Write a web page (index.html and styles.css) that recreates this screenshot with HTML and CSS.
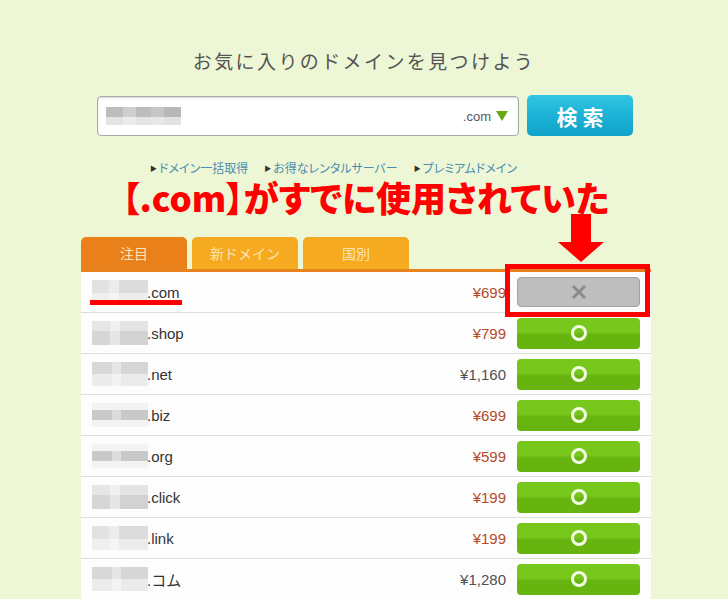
FILE: index.html
```html
<!DOCTYPE html>
<html lang="ja">
<head>
<meta charset="utf-8">
<link rel="stylesheet" href="styles.css">
</head>
<body>
<div class="page">
  <h1 class="title">お気に入りのドメインを見つけよう</h1>
  <div class="search">
    <div class="input">
      <span class="blur blur-input"></span>
      <span class="tld">.com</span>
      <span class="tri"></span>
    </div>
    <button class="go">検索</button>
  </div>
  <div class="links">
    <a><span class="mk">▶</span>ドメイン一括取得</a>
    <a><span class="mk">▶</span>お得なレンタルサーバー</a>
    <a><span class="mk">▶</span>プレミアムドメイン</a>
  </div>
  <div class="note">【.com】がすでに使用されていた</div>
  <div class="results">
    <div class="tabs">
      <div class="tab tab-on">注目</div>
      <div class="tab">新ドメイン</div>
      <div class="tab">国別</div>
    </div>
    <div class="bar"></div>
    <div class="rows">
      <div class="row"><span class="blur b1"></span><span class="name">.com</span><span class="price">¥699</span><span class="btn btn-no"><svg width="16" height="16" viewBox="0 0 16 16"><path d="M2 2L14 14M14 2L2 14" stroke="#8a8a8a" stroke-width="3"/></svg></span><span class="uline"></span></div>
      <div class="row"><span class="blur b2"></span><span class="name">.shop</span><span class="price">¥799</span><span class="btn"><span class="ring"></span></span></div>
      <div class="row"><span class="blur b3"></span><span class="name">.net</span><span class="price dark">¥1,160</span><span class="btn"><span class="ring"></span></span></div>
      <div class="row"><span class="blur b4"></span><span class="name">.biz</span><span class="price">¥699</span><span class="btn"><span class="ring"></span></span></div>
      <div class="row"><span class="blur b4"></span><span class="name">.org</span><span class="price">¥599</span><span class="btn"><span class="ring"></span></span></div>
      <div class="row"><span class="blur b2"></span><span class="name">.click</span><span class="price">¥199</span><span class="btn"><span class="ring"></span></span></div>
      <div class="row"><span class="blur b1"></span><span class="name">.link</span><span class="price">¥199</span><span class="btn"><span class="ring"></span></span></div>
      <div class="row"><span class="blur b3"></span><span class="name">.コム</span><span class="price dark">¥1,280</span><span class="btn"><span class="ring"></span></span></div>
    </div>
    <div class="hl"></div>
    <svg class="arrow" width="46" height="48" viewBox="0 0 46 48"><path d="M13 0H33V28H46L23 48L0 28H13Z" fill="#f00"/></svg>
  </div>
</div>
</body>
</html>
```
FILE: styles.css
```css
html, body {
  margin: 0;
  padding: 0;
  background: #edf7d6;
  font-family: "Liberation Sans", "Noto Sans CJK JP", sans-serif;
  overflow: hidden;
}
.page {
  padding-top: 49px;
}
.title {
  margin: 0;
  text-align: center;
  font-weight: normal;
  font-size: 19px;
  line-height: 24px;
  letter-spacing: 2.4px;
  color: #555;
  font-family: "Noto Sans CJK JP", sans-serif;
}
.search {
  display: flex;
  gap: 8px;
  margin: 23px 0 0 97px;
}
.input {
  box-sizing: border-box;
  width: 422px;
  height: 40px;
  background: #fff;
  border: 1px solid #a9a9a9;
  border-radius: 4px;
  box-shadow: inset 0 1px 2px rgba(0,0,0,.15);
  display: flex;
  align-items: center;
  padding: 0 10px 0 8px;
}
.blur {
  display: block;
  flex: none;
}
.blur-input {
  width: 75px;
  height: 18px;
  background:
    linear-gradient(180deg, rgba(255,255,255,0) 0 55%, rgba(255,255,255,.6) 55% 100%),
    linear-gradient(90deg, #bdbdbd 0 22%, #cfcfcf 22% 40%, #bcbcbc 40% 60%, #c6c6c6 60% 78%, #b8b8b8 78% 100%);
}
.tld {
  margin-left: auto;
  font-size: 13px;
  color: #555;
}
.tri {
  width: 0;
  height: 0;
  margin-left: 5px;
  border-left: 6px solid transparent;
  border-right: 6px solid transparent;
  border-top: 10px solid #6aa812;
}
.go {
  width: 106px;
  height: 41px;
  margin-top: -1px;
  border: none;
  border-radius: 5px;
  background: linear-gradient(180deg, #33c6e4 0%, #1bb2d6 50%, #12a2c8 100%);
  color: #fff;
  font-family: "Noto Sans CJK JP", sans-serif;
  font-weight: 700;
  font-size: 21px;
  letter-spacing: 5px;
  padding: 0 0 0 5px;
}
.links {
  display: flex;
  gap: 16px;
  margin: 24px 0 0 150px;
  font-family: "Noto Sans CJK JP", sans-serif;
  font-size: 12px;
  line-height: 16px;
  color: #4a8cb2;
  font-feature-settings: "palt";
}
.mk {
  font-size: 7px;
  margin-right: 2px;
  vertical-align: 2px;
  color: #333;
}
.note {
  margin: 3px 0 0 122px;
  font-family: "Noto Sans CJK JP", sans-serif;
  font-weight: 900;
  font-size: 35px;
  line-height: 36px;
  color: #f00;
  font-feature-settings: "palt";
}
.results {
  position: relative;
  margin: 22px 0 0 81px;
  width: 570px;
}
.tabs {
  display: flex;
  gap: 5px;
}
.tab {
  width: 106px;
  height: 32px;
  border-radius: 5px 5px 0 0;
  background: #f5aa20;
  color: #fde3b4;
  font-family: "Noto Sans CJK JP", sans-serif;
  font-size: 14px;
  line-height: 32px;
  text-align: center;
}
.tab-on {
  background: #e98019;
}
.bar {
  height: 3px;
  background: #e8821c;
}
.rows {
  background: #fdfdfd;
}
.row {
  position: relative;
  display: flex;
  align-items: center;
  height: 40px;
  border-bottom: 1px solid #dcdfd5;
  padding: 0 11px 0 11px;
}
.row .blur {
  width: 56px;
  height: 24px;
}
.b1 {
  background:
    linear-gradient(180deg, rgba(255,255,255,0) 0 55%, rgba(255,255,255,.45) 55% 100%),
    linear-gradient(90deg, #e2e2e2 0 30%, #ececec 30% 48%, #dcdcdc 48% 100%);
}
.b2 {
  background:
    linear-gradient(180deg, rgba(255,255,255,.4) 0 40%, rgba(255,255,255,0) 40% 100%),
    linear-gradient(90deg, #d6d6d6 0 32%, #e6e6e6 32% 50%, #d2d2d2 50% 100%);
}
.b3 {
  background:
    linear-gradient(180deg, rgba(255,255,255,0) 0 50%, rgba(255,255,255,.5) 50% 100%),
    linear-gradient(90deg, #d8d8d8 0 36%, #e6e6e6 36% 52%, #d6d6d6 52% 100%);
}
.b4 {
  height: 10px !important;
  background: linear-gradient(90deg, #c9c9c9 0 36%, #dcdcdc 36% 52%, #c8c8c8 52% 100%);
  box-shadow: 0 -7px 0 #f3f3f3, 0 7px 0 #f3f3f3;
}
.name {
  margin-left: -1px;
  font-size: 15px;
  color: #333;
}
.price {
  margin-left: auto;
  margin-right: 11px;
  font-size: 15px;
  color: #b5492b;
}
.price.dark {
  color: #4f4f57;
}
.btn {
  box-sizing: border-box;
  width: 123px;
  height: 31px;
  border-radius: 4px;
  background: linear-gradient(180deg, #78c71c 0 45%, #67b410 55% 100%);
  display: flex;
  align-items: center;
  justify-content: center;
}
.ring {
  width: 10px;
  height: 10px;
  border: 3px solid #f3fde4;
  border-radius: 50%;
}
.btn-no {
  height: 30px;
  background: #bebebe;
  border: 1px solid #a3a3a3;
}
.uline {
  position: absolute;
  left: 9px;
  top: 28px;
  width: 92px;
  height: 5px;
  background: #f00;
}
.hl {
  position: absolute;
  left: 424px;
  top: 27px;
  width: 145px;
  height: 53px;
  box-sizing: border-box;
  border: 5px solid #f00;
}
.arrow {
  position: absolute;
  left: 477px;
  top: -23px;
}
```
